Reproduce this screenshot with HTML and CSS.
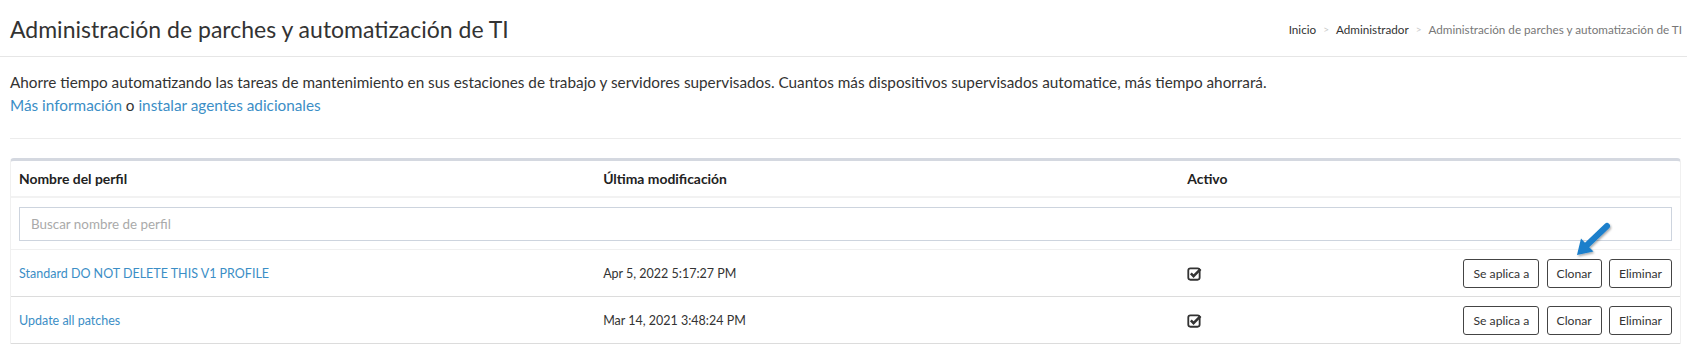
FILE: index.html
```html
<!DOCTYPE html>
<html lang="es">
<head>
<meta charset="utf-8">
<title>Administración de parches y automatización de TI</title>
<link rel="stylesheet" href="styles.css">
</head>
<body>
<header class="page-header">
  <h1 class="page-title">Administración de parches y automatización de TI</h1>
  <nav class="breadcrumb">
    <a class="crumb" href="#">Inicio</a><span class="sep">&gt;</span>
    <a class="crumb" href="#">Administrador</a><span class="sep">&gt;</span>
    <span class="crumb current">Administración de parches y automatización de TI</span>
  </nav>
</header>

<main class="content">
  <section class="intro">
    <p class="intro-text">Ahorre tiempo automatizando las tareas de mantenimiento en sus estaciones de trabajo y servidores supervisados. Cuantos más dispositivos supervisados automatice, más tiempo ahorrará.</p>
    <p class="intro-text"><a class="link" href="#">Más información</a> o <a class="link" href="#">instalar agentes adicionales</a></p>
  </section>

  <div class="table-wrap">
    <table class="profiles">
      <colgroup>
        <col class="c-name">
        <col class="c-date">
        <col class="c-active">
        <col class="c-actions">
      </colgroup>
      <thead>
        <tr class="head-row">
          <th>Nombre del perfil</th>
          <th>Última modificación</th>
          <th>Activo</th>
          <th></th>
        </tr>
      </thead>
      <tbody>
        <tr class="search-row">
          <td colspan="4"><input class="search" type="text" placeholder="Buscar nombre de perfil"></td>
        </tr>
        <tr class="data-row">
          <td><a class="link" href="#">Standard DO NOT DELETE THIS V1 PROFILE</a></td>
          <td>Apr 5, 2022 5:17:27 PM</td>
          <td>
            <svg class="check" viewBox="0 0 14 14" width="15" height="15" aria-hidden="true">
              <rect x="1.2" y="2.2" width="10.6" height="10.6" rx="2" fill="none" stroke="#333" stroke-width="1.7"/>
              <path d="M3.6 6.9 L6.1 9.4 L12.6 2.9" fill="none" stroke="#333" stroke-width="2.4" stroke-linejoin="miter"/>
            </svg>
          </td>
          <td class="actions">
            <button class="btn">Se aplica a</button>
            <button class="btn">Clonar</button>
            <button class="btn">Eliminar</button>
          </td>
        </tr>
        <tr class="data-row">
          <td><a class="link" href="#">Update all patches</a></td>
          <td>Mar 14, 2021 3:48:24 PM</td>
          <td>
            <svg class="check" viewBox="0 0 14 14" width="15" height="15" aria-hidden="true">
              <rect x="1.2" y="2.2" width="10.6" height="10.6" rx="2" fill="none" stroke="#333" stroke-width="1.7"/>
              <path d="M3.6 6.9 L6.1 9.4 L12.6 2.9" fill="none" stroke="#333" stroke-width="2.4" stroke-linejoin="miter"/>
            </svg>
          </td>
          <td class="actions">
            <button class="btn">Se aplica a</button>
            <button class="btn">Clonar</button>
            <button class="btn">Eliminar</button>
          </td>
        </tr>
      </tbody>
    </table>
  </div>
</main>

<svg class="callout-arrow" viewBox="0 0 50 50" width="50" height="50" aria-hidden="true">
  <defs>
    <filter id="sh" x="-30%" y="-30%" width="160%" height="160%">
      <feDropShadow dx="1" dy="1.5" stdDeviation="1.2" flood-color="#000" flood-opacity="0.35"/>
    </filter>
  </defs>
  <g filter="url(#sh)">
    <line x1="42" y1="11" x2="21" y2="31" stroke="#1a7fcb" stroke-width="6" stroke-linecap="round"/>
    <polygon points="12,40 16,23.5 22,30 28.5,36.5" fill="#1a7fcb"/>
  </g>
</svg>
</body>
</html>
```

FILE: styles.css
```css
* { box-sizing: border-box; }

html, body {
  margin: 0;
  padding: 0;
  background: #fff;
}

body {
  font-family: "Lato", "Liberation Sans", sans-serif;
  color: #333;
  position: relative;
}

.page-header {
  display: flex;
  justify-content: space-between;
  align-items: center;
  height: 57px;
  padding: 0 5px 0 10px;
  border-bottom: 1px solid #e6e6e6;
}

.page-title {
  margin: 0;
  font-size: 23px;
  font-weight: 400;
  color: #333;
  padding-top: 1px;
}

.breadcrumb {
  display: flex;
  align-items: center;
  font-size: 11.7px;
  padding-top: 2px;
}

.crumb {
  color: #333;
  text-decoration: none;
}

.crumb.current {
  color: #777;
}

.sep {
  color: #c8c8c8;
  margin: 0 7px;
  font-size: 10px;
}

.content {
  padding: 0 6px 0 10px;
}

.intro {
  padding: 14px 0 21px;
  border-bottom: 1px solid #ececec;
}

.intro-text {
  margin: 0;
  font-size: 15.3px;
  line-height: 23px;
  color: #333;
}

.link {
  color: #3b8ec6;
  text-decoration: none;
}

.table-wrap {
  margin-top: 19px;
  border-top: 3px solid #d4d8e0;
  border-left: 1px solid #f0f0f0;
  border-right: 1px solid #f0f0f0;
  border-radius: 4px 4px 0 0;
}

.profiles {
  width: 100%;
  border-collapse: collapse;
  table-layout: fixed;
}

.c-name { width: 35%; }
.c-date { width: 35%; }
.c-active { width: 15%; }
.c-actions { width: 15%; }

.profiles th {
  text-align: left;
  font-size: 13.9px;
  font-weight: 700;
  color: #222;
  padding: 0 8px;
  height: 36px;
  border-bottom: 2px solid #f2f2f2;
}

.search-row td {
  padding: 9px 8px 8px;
  border-bottom: 1px solid #f0f0f0;
}

.search {
  display: block;
  width: 100%;
  height: 34px;
  border: 1px solid #cdd4de;
  padding: 0 11px;
  font-family: "Lato", "Liberation Sans", sans-serif;
  font-size: 13.4px;
  color: #333;
  outline: none;
}

.search::placeholder {
  color: #aaa;
}

.data-row td {
  height: 47px;
  padding: 0 8px;
  font-size: 12.5px;
  color: #333;
  border-bottom: 1px solid #dcdcdc;
  vertical-align: middle;
  white-space: nowrap;
}

.check {
  display: block;
}

.actions {
  text-align: right;
}

.btn {
  height: 29px;
  padding: 0 9px;
  margin-left: 4px;
  border: 1px solid #444;
  border-radius: 3px;
  background: #fff;
  color: #333;
  font-family: "Lato", "Liberation Sans", sans-serif;
  font-size: 12.2px;
  cursor: pointer;
}

.callout-arrow {
  position: absolute;
  left: 1565px;
  top: 215px;
}
```
